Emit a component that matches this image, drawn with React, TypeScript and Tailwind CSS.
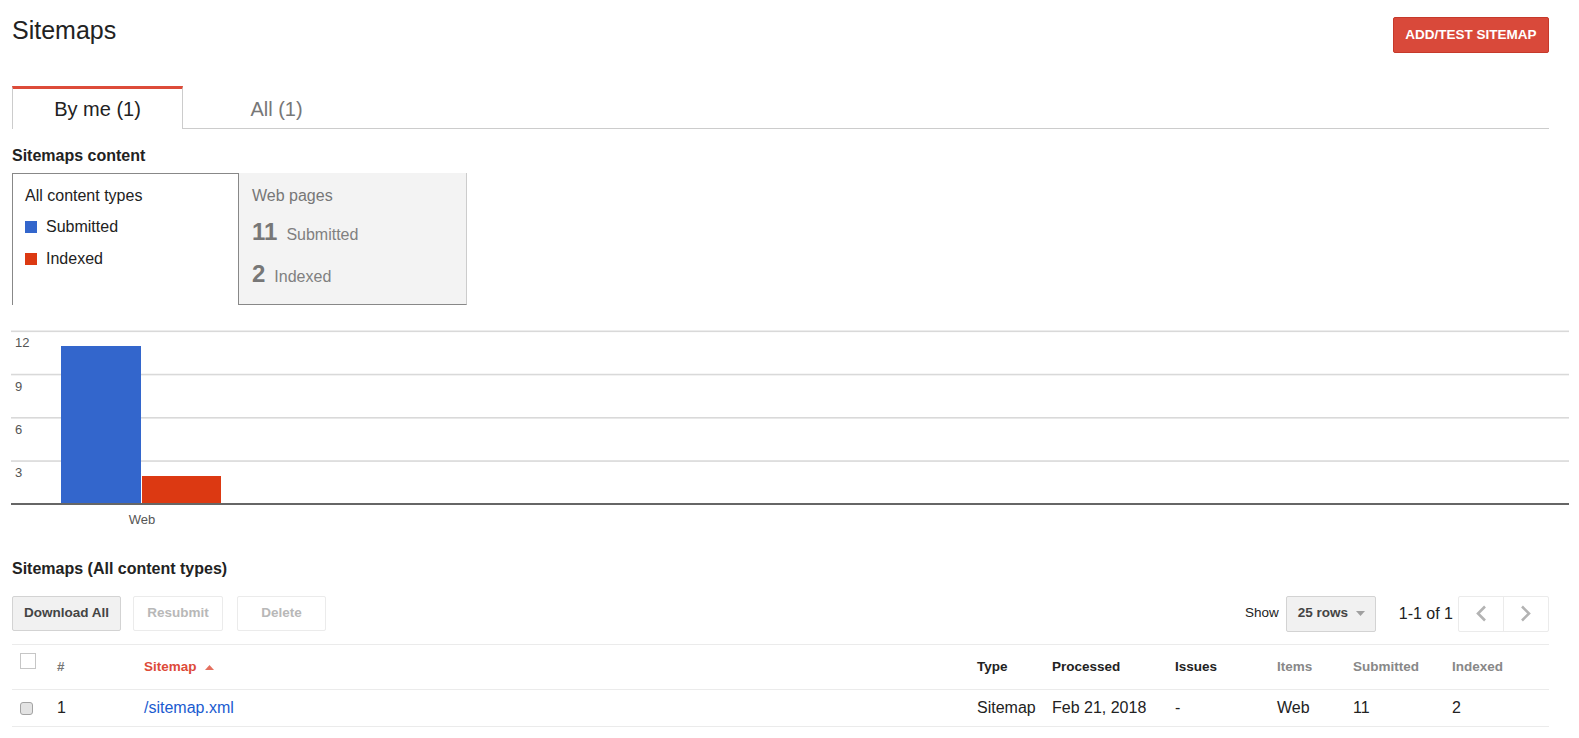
import React from "react";

function ChevronLeft() {
  return (
    <svg width="12" height="17" viewBox="0 0 12 17">
      <polyline points="10,1.5 3,8.5 10,15.5" fill="none" stroke="#b3b3b3" strokeWidth="2.6" />
    </svg>
  );
}
function ChevronRight() {
  return (
    <svg width="12" height="17" viewBox="0 0 12 17">
      <polyline points="2,1.5 9,8.5 2,15.5" fill="none" stroke="#b3b3b3" strokeWidth="2.6" />
    </svg>
  );
}

function Chart() {
  const grid = [11, 54.25, 97.5, 140.75];
  const labels = ["12", "9", "6", "3"];
  return (
    <svg width="1558" height="215" className="ml-[-1px] mt-[15px] block">
      {grid.map((y, i) => (
        <g key={i}>
          <rect x={0} y={y - 0.5} width={1558} height={1.6} fill="#d9d9d9" />
          <text
            x={4}
            y={y + 16.3}
            fontSize={13}
            fill="#555"
            fontFamily="'Liberation Sans', Arial, sans-serif"
          >
            {labels[i]}
          </text>
        </g>
      ))}
      <rect x={50} y={26} width={80} height={157.5} fill="#3366cc" />
      <rect x={131} y={156} width={79} height={27.5} fill="#dc3912" />
      <rect x={0} y={183} width={1558} height={2} fill="#666" />
      <text
        x={131}
        y={204.3}
        fontSize={13}
        textAnchor="middle"
        fill="#555"
        fontFamily="'Liberation Sans', Arial, sans-serif"
      >
        Web
      </text>
    </svg>
  );
}

export default function App() {
  return (
    <div className="min-h-screen bg-white pl-[12px] pr-[30px] pt-[17px] font-['Liberation_Sans',Arial,sans-serif] text-[#222]">
      {/* Header */}
      <div className="flex items-start justify-between">
        <h1 className="mt-[-1px] text-[25px] font-normal leading-[28px] text-[#222]">Sitemaps</h1>
        <button className="h-[36px] w-[156px] rounded-[2px] border border-[#c6392a] bg-[#d9493a] text-[13.5px] font-bold text-white">
          ADD/TEST SITEMAP
        </button>
      </div>

      {/* Tabs */}
      <div className="mt-[33px] flex h-[43px] items-stretch">
        <div className="flex w-[171px] items-center justify-center border-x border-t-[3px] border-x-[#ccc] border-t-[#dd4b39] bg-white text-[20px] leading-[40px] text-[#222]">
          By me (1)
        </div>
        <div className="flex w-[187px] items-center justify-center border-b border-[#ccc] pt-[3px] text-[20px] leading-[38px] text-[#777]">
          All (1)
        </div>
        <div className="flex-1 border-b border-[#ccc]" />
      </div>

      {/* Sitemaps content */}
      <div className="mt-[17px] text-[16px] font-bold leading-[20px] text-[#222]">Sitemaps content</div>
      <div className="mt-[7px] flex h-[132px]">
        <div className="w-[226px] border-l border-t border-[#888] pl-[12px] pt-[12px]">
          <div className="text-[16px] leading-[20px]">All content types</div>
          <div className="mt-[11px] flex h-[20px] items-center">
            <span className="block h-[12px] w-[12px] bg-[#3366cc]" />
            <span className="ml-[9px] text-[16px] leading-[20px]">Submitted</span>
          </div>
          <div className="mt-[12px] flex h-[20px] items-center">
            <span className="block h-[12px] w-[12px] bg-[#dc3912]" />
            <span className="ml-[9px] text-[16px] leading-[20px]">Indexed</span>
          </div>
        </div>
        <div className="w-[229px] border-b border-l border-r border-b-[#888] border-l-[#888] border-r-[#ccc] bg-[#f3f3f3] pl-[13px] pt-[13px]">
          <div className="text-[16px] leading-[20px] text-[#777]">Web pages</div>
          <div className="mt-[12px] flex h-[28px] items-baseline">
            <span className="text-[24px] font-bold leading-[28px] text-[#777]">11</span>
            <span className="ml-[9px] text-[16px] text-[#808080]">Submitted</span>
          </div>
          <div className="mt-[14px] flex h-[28px] items-baseline">
            <span className="text-[24px] font-bold leading-[28px] text-[#777]">2</span>
            <span className="ml-[9px] text-[16px] text-[#808080]">Indexed</span>
          </div>
        </div>
      </div>

      {/* Chart */}
      <Chart />

      {/* Sitemaps table section */}
      <div className="mt-[24px] text-[16px] font-bold leading-[20px] text-[#222]">Sitemaps (All content types)</div>
      <div className="mt-[17px] flex h-[35px] items-center">
        <button className="h-[35px] w-[109px] rounded-[2px] border border-[#d3d3d3] bg-[#f1f1f1] text-[13.5px] font-bold text-[#444]">
          Download All
        </button>
        <button className="ml-[12px] h-[35px] w-[90px] rounded-[2px] border border-[#ebebeb] bg-white text-[13.5px] font-bold text-[#b8b8b8]">
          Resubmit
        </button>
        <button className="ml-[14px] h-[35px] w-[89px] rounded-[2px] border border-[#ebebeb] bg-white text-[13.5px] font-bold text-[#b8b8b8]">
          Delete
        </button>
        <div className="ml-auto flex items-center">
          <span className="text-[13.5px] text-[#222]">Show</span>
          <button className="ml-[7px] flex h-[36px] w-[90px] items-center rounded-[2px] border border-[#d3d3d3] bg-[#f1f1f1] pl-[11px] text-[13.5px] font-bold text-[#444]">
            25 rows
            <svg width="9" height="5" viewBox="0 0 9 5" className="ml-[8px]">
              <polygon points="0,0 9,0 4.5,5" fill="#a0a0a0" />
            </svg>
          </button>
          <span className="ml-[23px] text-[16px] text-[#222]">1-1 of 1</span>
          <div className="ml-[5px] flex h-[36px] rounded-[2px] border border-[#ebebeb]">
            <button className="flex w-[45px] items-center justify-center border-r border-[#ebebeb]">
              <ChevronLeft />
            </button>
            <button className="flex w-[44px] items-center justify-center">
              <ChevronRight />
            </button>
          </div>
        </div>
      </div>

      <div className="mt-[13px] border-t border-[#ebebeb]">
        <div className="grid h-[45px] grid-cols-[37px_87px_833px_75px_123px_102px_76px_99px_1fr] items-center border-b border-[#ebebeb] pl-[8px] text-[13.5px] font-bold">
          <div>
            <span className="mb-[12px] block h-[16px] w-[16px] border border-[#c6c6c6] bg-white" />
          </div>
          <div className="text-[#777]">#</div>
          <div className="flex items-center text-[#dd4b39]">
            Sitemap
            <svg width="9" height="5" viewBox="0 0 9 5" className="ml-[8px]">
              <polygon points="0,5 9,5 4.5,0" fill="#e4705f" />
            </svg>
          </div>
          <div className="text-[#222]">Type</div>
          <div className="text-[#222]">Processed</div>
          <div className="text-[#222]">Issues</div>
          <div className="text-[#888]">Items</div>
          <div className="text-[#888]">Submitted</div>
          <div className="text-[#888]">Indexed</div>
        </div>
        <div className="grid h-[37px] grid-cols-[37px_87px_833px_75px_123px_102px_76px_99px_1fr] items-center border-b border-[#ebebeb] pl-[8px] text-[16px] text-[#222]">
          <div>
            <span className="block h-[13px] w-[13px] rounded-[3px] border border-[#a3a3a3] bg-[#e3e3e3]" />
          </div>
          <div>1</div>
          <div className="text-[#1a5bd0]">/sitemap.xml</div>
          <div>Sitemap</div>
          <div>Feb 21, 2018</div>
          <div>-</div>
          <div>Web</div>
          <div>11</div>
          <div>2</div>
        </div>
      </div>
    </div>
  );
}
